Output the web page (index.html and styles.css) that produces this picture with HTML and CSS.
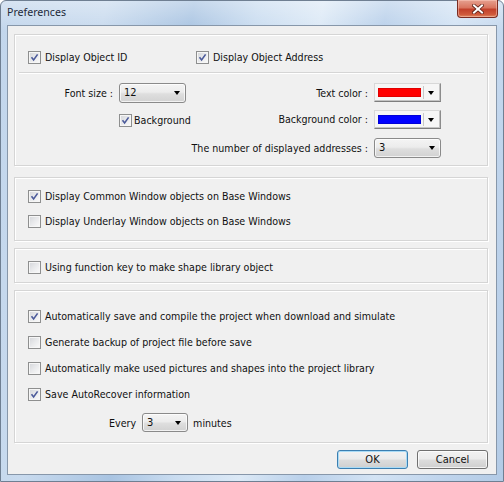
FILE: index.html
```html
<!DOCTYPE html>
<html>
<head>
<meta charset="utf-8">
<link rel="stylesheet" href="styles.css">
</head>
<body>
<div class="window">
  <div class="titlebar">
    <span class="title">Preferences</span>
    <div class="close">
      <svg width="12" height="10" viewBox="0 0 12 10"><path d="M2 1.5 L10 8.5 M10 1.5 L2 8.5" stroke="#5a1e14" stroke-width="3.6" stroke-linecap="square"/><path d="M2 1.5 L10 8.5 M10 1.5 L2 8.5" stroke="#ffffff" stroke-width="2" stroke-linecap="square"/></svg>
    </div>
  </div>
  <div class="client">
    <div class="group g1">
      <div class="toprow">
        <label class="chk"><span class="cb"><svg viewBox="0 0 13 13"><path d="M3.5 6.3 L5.6 9 L9.6 3.4" fill="none" stroke="#4b5a9a" stroke-width="1.6"/></svg></span>Display Object ID</label>
        <label class="chk"><span class="cb"><svg viewBox="0 0 13 13"><path d="M3.5 6.3 L5.6 9 L9.6 3.4" fill="none" stroke="#4b5a9a" stroke-width="1.6"/></svg></span>Display Object Address</label>
      </div>
      <div class="sep"></div>
      <div class="form">
        <span class="lbl r1 c1">Font size :</span>
        <div class="combo r1 c2"><span>12</span><i class="arrow"></i></div>
        <span class="lbl r1 c3">Text color :</span>
        <div class="cpick r1 c4"><span class="sw red"></span><span class="vsep"></span><i class="arrow"></i></div>

        <label class="chk bgchk r2 c2"><span class="cb"><svg viewBox="0 0 13 13"><path d="M3.5 6.3 L5.6 9 L9.6 3.4" fill="none" stroke="#4b5a9a" stroke-width="1.6"/></svg></span>Background</label>
        <span class="lbl r2 c3">Background color :</span>
        <div class="cpick r2 c4"><span class="sw blue"></span><span class="vsep"></span><i class="arrow"></i></div>

        <span class="lbl r3 c13">The number of displayed addresses :</span>
        <div class="combo r3 c4"><span>3</span><i class="arrow"></i></div>
      </div>
    </div>

    <div class="group g2">
      <label class="chk"><span class="cb"><svg viewBox="0 0 13 13"><path d="M3.5 6.3 L5.6 9 L9.6 3.4" fill="none" stroke="#4b5a9a" stroke-width="1.6"/></svg></span>Display Common Window objects on Base Windows</label>
      <label class="chk"><span class="cb"></span>Display Underlay Window objects on Base Windows</label>
    </div>

    <div class="group g3">
      <label class="chk"><span class="cb"></span>Using function key to make shape library object</label>
    </div>

    <div class="group g4">
      <label class="chk"><span class="cb"><svg viewBox="0 0 13 13"><path d="M3.5 6.3 L5.6 9 L9.6 3.4" fill="none" stroke="#4b5a9a" stroke-width="1.6"/></svg></span>Automatically save and compile the project when download and simulate</label>
      <label class="chk"><span class="cb"></span>Generate backup of project file before save</label>
      <label class="chk"><span class="cb"></span>Automatically make used pictures and shapes into the project library</label>
      <label class="chk"><span class="cb"><svg viewBox="0 0 13 13"><path d="M3.5 6.3 L5.6 9 L9.6 3.4" fill="none" stroke="#4b5a9a" stroke-width="1.6"/></svg></span>Save AutoRecover information</label>
      <div class="every">
        <span>Every</span>
        <div class="combo small"><span>3</span><i class="arrow"></i></div>
        <span>minutes</span>
      </div>
    </div>

    <div class="buttons">
      <div class="btn default">OK</div>
      <div class="btn">Cancel</div>
    </div>
  </div>
</div>
</body>
</html>
```

FILE: styles.css
```css
html, body {
  margin: 0;
  padding: 0;
}
body {
  width: 504px;
  height: 482px;
  overflow: hidden;
  background: #ffffff;
  font-family: "DejaVu Sans Condensed", "DejaVu Sans", sans-serif;
  font-size: 10.6px;
  color: #111;
}
.window {
  box-sizing: border-box;
  width: 504px;
  height: 482px;
  border: 1px solid #6f7f92;
  border-radius: 6px 6px 0 0;
  padding: 0 6px 6px 6px;
  display: flex;
  flex-direction: column;
  background:
    linear-gradient(to bottom, rgba(255,255,255,0.35), rgba(255,255,255,0) 30px),
    linear-gradient(100deg, #c2d6ec 0%, #c8daee 18%, #a9c4e2 33%, #c9dcf0 44%, #dce9f6 55%, #b9d0ea 66%, #d3e3f4 78%, #bfd4ec 90%, #b3cbe6 100%);
}
.titlebar {
  height: 24px;
  display: flex;
  align-items: flex-start;
  padding-left: 0;
}
.title {
  font-family: "Noto Sans", "Open Sans", sans-serif;
  font-size: 10.6px;
  color: #1e2a3a;
  line-height: 24px;
  margin-top: -1px;
}
.close {
  margin-left: auto;
  margin-right: -1px;
  margin-top: -1px;
  width: 41px;
  height: 18px;
  box-sizing: border-box;
  border: 1px solid #7a2c22;
  border-top: none;
  border-radius: 0 0 4px 4px;
  background: linear-gradient(to bottom, #e6a190 0%, #d9755f 45%, #c2412b 55%, #cf5a3c 85%, #e08a62 100%);
  box-shadow: inset 0 0 0 1px rgba(255,210,200,0.45);
  display: flex;
  align-items: center;
  justify-content: center;
}
.close svg { display: block; }
.client {
  box-sizing: border-box;
  height: 450px;
  border: 1px solid #8797aa;
  background: #f0f0f0;
  padding: 8px 8px 0 6px;
  display: flex;
  flex-direction: column;
}
.group {
  box-sizing: border-box;
  width: 474px;
  border: 1px solid #d5d5d5;
  box-shadow: 1px 1px 0 #ffffff, inset 1px 1px 0 #ffffff;
  display: flex;
  flex-direction: column;
}
.g1 { height: 132px; padding-top: 13px; }
.g2 { height: 64px; margin-top: 11px; padding: 9px 0 0 13px; gap: 7px; }
.g3 { height: 35px; margin-top: 7px; padding: 9px 0 0 13px; }
.g4 { height: 153px; margin-top: 7px; padding: 16px 0 0 13px; gap: 8px; }

.chk {
  display: flex;
  align-items: center;
  height: 18px;
  gap: 4px;
  white-space: nowrap;
}
.cb {
  box-sizing: border-box;
  width: 13px;
  height: 13px;
  flex: none;
  border: 1px solid #8e8f8f;
  background: linear-gradient(135deg, #d3d5d9 0%, #e9eaec 50%, #fbfbfb 100%);
  box-shadow: inset 0 0 0 1px #f6f6f6;
  position: relative;
}
.cb svg {
  position: absolute;
  left: -1px;
  top: -1px;
  width: 13px;
  height: 13px;
}
.toprow {
  display: grid;
  grid-template-columns: 168px auto;
  padding-left: 13px;
}
.sep {
  height: 0;
  border-top: 1px solid #d5d5d5;
  border-bottom: 1px solid #ffffff;
  margin: 6px 3px 0 4px;
}
.form {
  display: grid;
  grid-template-columns: 98px 67px 1fr 67px;
  grid-template-rows: 27px 28px 20px;
  column-gap: 6px;
  padding-right: 46px;
  margin-top: 9px;
  align-items: start;
}
.lbl {
  height: 20px;
  line-height: 20px;
  text-align: right;
  white-space: nowrap;
}
.r1 { grid-row: 1; }
.r2 { grid-row: 2; }
.r3 { grid-row: 3; }
.c1 { grid-column: 1; }
.c2 { grid-column: 2; }
.c3 { grid-column: 3; }
.c4 { grid-column: 4; }
.c13 { grid-column: 1 / 4; }
.lbl.r2 { height: 19px; line-height: 19px; }
.bgchk { height: 20px; gap: 2px; }

.combo {
  box-sizing: border-box;
  height: 20px;
  border: 1px solid #8a8a8a;
  border-radius: 3px;
  background: linear-gradient(to bottom, #f4f4f4 0%, #ececec 45%, #dedede 55%, #d2d2d2 100%);
  box-shadow: inset 0 0 0 1px rgba(255,255,255,0.7);
  display: flex;
  align-items: center;
  padding: 0 5px 0 4px;
}
.combo span { flex: 1; line-height: 18px; font-size: 11px; }
.arrow {
  width: 0;
  height: 0;
  border-left: 3.5px solid transparent;
  border-right: 3.5px solid transparent;
  border-top: 4px solid #000;
  flex: none;
}
.cpick {
  box-sizing: border-box;
  height: 19px;
  border: 1px solid;
  border-color: #d8d8d8 #8c8c8c #7e7e7e #d8d8d8;
  background: #f6f6f6;
  box-shadow: inset -1px -1px 0 #c4c4c4;
  display: flex;
  align-items: center;
  padding-left: 3px;
}
.sw {
  box-sizing: border-box;
  width: 43px;
  height: 9px;
  flex: none;
}
.red { background: #ff0000; border: 1px solid #e00000; }
.blue { background: #0000ff; border: 1px solid #0000d8; }
.vsep {
  width: 1px;
  height: 13px;
  background: #c8c8c8;
  margin-left: 2px;
  flex: none;
}
.cpick .arrow { margin-left: 4px; }

.every {
  display: flex;
  align-items: center;
  margin-top: 2px;
  padding-left: 81px;
  height: 19px;
}
.every .combo.small {
  width: 46px;
  height: 19px;
  margin: 0 5px 0 6px;
  padding-right: 6px;
}

.buttons {
  display: flex;
  justify-content: flex-end;
  gap: 9px;
  margin-top: 7px;
  width: 474px;
}
.btn {
  box-sizing: border-box;
  width: 71px;
  height: 19px;
  border: 1px solid #707070;
  border-radius: 3px;
  background: linear-gradient(to bottom, #f2f2f2 0%, #ebebeb 48%, #dddddd 52%, #cfcfcf 100%);
  box-shadow: inset 0 0 0 1px rgba(255,255,255,0.75);
  text-align: center;
  line-height: 17px;
  font-size: 11px;
}
.btn.default {
  border-color: #3c7fb1;
  box-shadow: inset 0 0 0 1px #a9dbf6;
}
```
